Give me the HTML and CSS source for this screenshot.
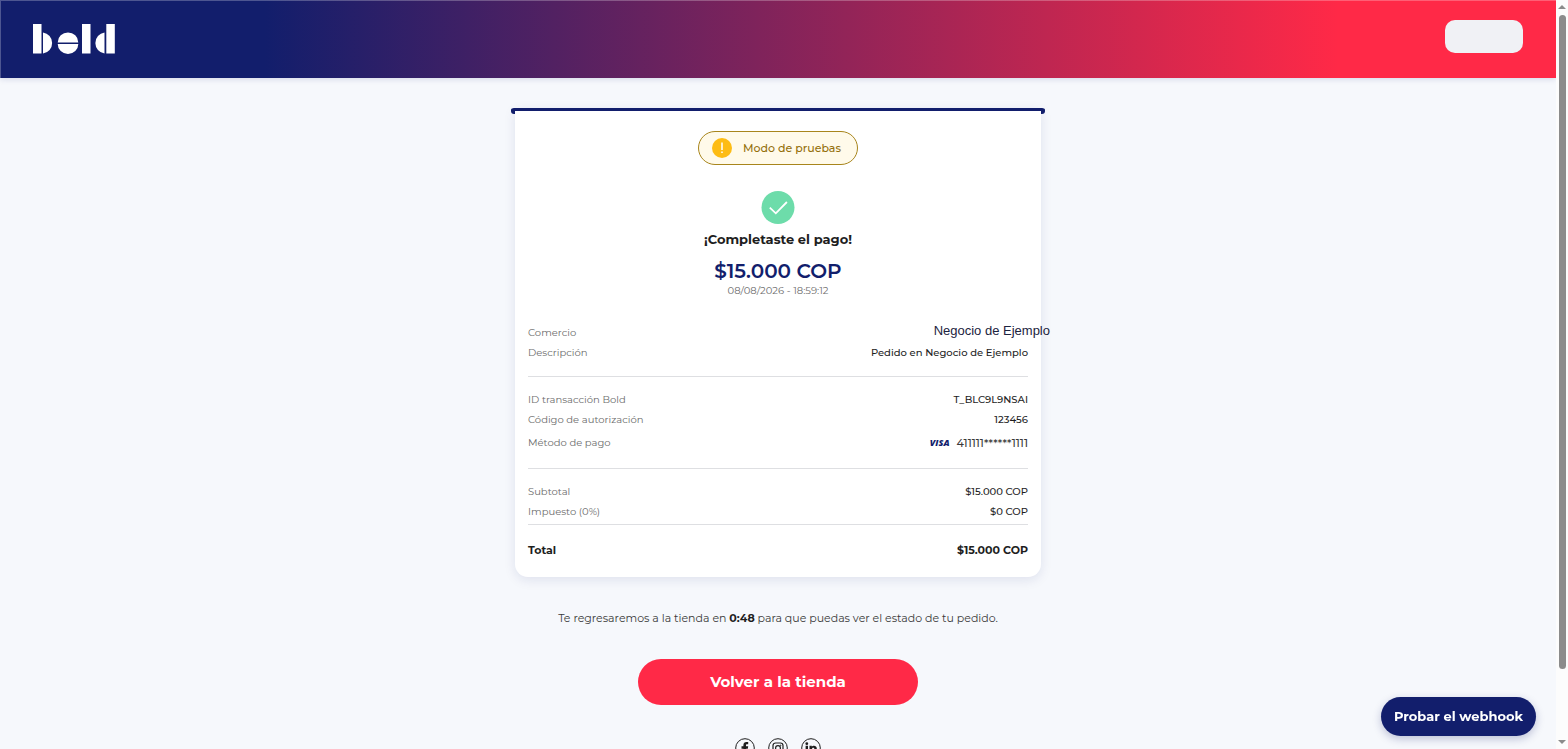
FILE: index.html
```html
<!DOCTYPE html>
<html lang="es">
<head>
	<meta charset="UTF-8">
	<meta name="viewport" content="width=device-width, initial-scale=1">
	<title>Bold</title>
	<link rel="stylesheet" href="styles.css">
</head>
<body>
	<div class="page">
		<header class="header">
			<a class="logo" href="#" aria-label="Bold">
				<svg width="82" height="30" viewBox="0 0 82 30" fill="#fff">
					<rect x="0" y="0" width="8.5" height="29.5"/>
					<path d="M10 8.5a10.6 10.6 0 0 1 0 21z"/>
					<path d="M24.7 18.4a10.3 10 0 0 1 20.6 0zM24.7 20a10.3 10 0 0 0 20.6 0z"/>
					<rect x="49" y="0" width="8.5" height="29.5"/>
					<path d="M71.5 8.5a10.6 10.6 0 0 0 0 21z"/>
					<rect x="73.3" y="0" width="8.5" height="29.5"/>
				</svg>
			</a>
			<button type="button" class="header-btn" aria-label="Menú"></button>
		</header>

		<main class="main">
			<section class="card">
				<div class="badge">
					<svg width="20" height="20" viewBox="0 0 20 20">
						<circle cx="10" cy="10" r="10" fill="#fdbc14"/>
						<path d="M10 4.5v7.5M10 13.4v1.6" stroke="#fff" stroke-width="1.5"/>
					</svg>
					<span>Modo de pruebas</span>
				</div>
				<svg class="check" width="34" height="34" viewBox="0 0 34 34">
					<circle cx="17" cy="16.5" r="16.5" fill="#6ddcaa"/>
					<path d="M8.8 16.6l6 5.7L25.9 11" fill="none" stroke="#fff" stroke-width="1.8"/>
				</svg>
				<h1 class="title">¡Completaste el pago!</h1>
				<p class="amount">$15.000 COP</p>
				<p class="date">08/08/2026 - 18:59:12</p>

				<dl class="group">
					<div class="row"><dt>Comercio</dt><dd class="shop">Negocio de Ejemplo</dd></div>
					<div class="row"><dt>Descripción</dt><dd>Pedido en Negocio de Ejemplo</dd></div>
				</dl>
				<dl class="group">
					<div class="row"><dt>ID transacción Bold</dt><dd>T_BLC9L9NSAI</dd></div>
					<div class="row"><dt>Código de autorización</dt><dd>123456</dd></div>
					<div class="row method"><dt>Método de pago</dt><dd><span class="visa">VISA</span>411111******1111</dd></div>
				</dl>
				<dl class="group sums">
					<div class="row"><dt>Subtotal</dt><dd>$15.000 COP</dd></div>
					<div class="row"><dt>Impuesto (0%)</dt><dd>$0 COP</dd></div>
				</dl>
				<dl class="group total">
					<div class="row"><dt>Total</dt><dd>$15.000 COP</dd></div>
				</dl>
			</section>

			<p class="notice">Te regresaremos a la tienda en <b>0:48</b> para que puedas ver el estado de tu pedido.</p>
			<button type="button" class="back-btn">Volver a la tienda</button>

			<nav class="social">
				<a href="#" aria-label="Facebook">
					<svg width="20" height="20" viewBox="0 0 20 20">
						<circle cx="10" cy="10" r="9.3" fill="none" stroke="#1e1e1e"/>
						<path d="M8.4 16v-5.2H6.5V8.3h1.9V7c0-2.2 1.2-3.1 3-3.1h1.8v2.3H12c-.8 0-1 .3-1 1v1.1h2.2l-.4 2.5H11V16z" fill="#1e1e1e"/>
					</svg>
				</a>
				<a href="#" aria-label="Instagram">
					<svg width="20" height="20" viewBox="0 0 20 20" fill="none" stroke="#1e1e1e">
						<circle cx="10" cy="10" r="9.3"/>
						<rect x="5" y="5" width="10" height="10" rx="2.6" stroke-width="1.2"/>
						<circle cx="10" cy="10" r="2.4" stroke-width="1.2"/>
						<circle cx="12.8" cy="7.2" r=".3"/>
					</svg>
				</a>
				<a href="#" aria-label="LinkedIn">
					<svg width="20" height="20" viewBox="0 0 20 20">
						<circle cx="10" cy="10" r="9.3" fill="none" stroke="#1e1e1e"/>
						<circle cx="5.8" cy="5.7" r="1.4" fill="#1e1e1e"/>
						<path d="M4.6 7.8H7V15H4.6zM8.5 7.8h2.3v.9c1-1.6 5-1.6 5 1.9V15h-2.4v-3.9c0-1.9-2.4-1.7-2.4 0V15H8.5z" fill="#1e1e1e"/>
					</svg>
				</a>
			</nav>
		</main>
	</div>

	<div class="scrollbar" aria-hidden="true">
		<svg width="8" height="4" viewBox="0 0 8 4"><path d="M0 4l4-4 4 4z" fill="#8b8b8b"/></svg>
		<div class="track"><div class="thumb"></div></div>
		<svg width="8" height="4" viewBox="0 0 8 4"><path d="M0 0l4 4 4-4z" fill="#8b8b8b"/></svg>
	</div>

	<button type="button" class="webhook-btn">Probar el webhook</button>
</body>
</html>
```

FILE: styles.css
```css
* {
	box-sizing: border-box;
}
body {
	display: flex;
	height: 100vh;
	margin: 0;
	overflow: hidden;
	background: #f6f8fc;
	color: #1e1e1e;
	font-family: Montserrat, Inter, sans-serif;
	font-size: 10px;
	line-height: 20px;
}
h1, p, dl, dd {
	margin: 0;
}
button {
	border: 0;
	font-family: inherit;
	cursor: pointer;
}
svg {
	display: block;
}
.page {
	flex: 1;
	overflow: hidden;
}

/* header */
.header {
	display: flex;
	justify-content: space-between;
	align-items: center;
	height: 78px;
	padding: 0 33px 2px 32px;
	border-top: 1px solid rgba(255, 255, 255, .25);
	border-left: 1px solid rgba(255, 255, 255, .25);
	background: linear-gradient(90deg, #121e6c 17%, #ff2947 86%) border-box;
	box-shadow: 0 1px 6px rgba(18, 30, 108, .15);
}
.header-btn {
	width: 78px;
	height: 33px;
	margin-bottom: 5px;
	border-radius: 10px;
	background: #f0f1f5;
}

.main {
	display: flex;
	flex-direction: column;
	align-items: center;
	padding: 30px 16px 32px;
}

/* card */
.card {
	position: relative;
	display: flex;
	flex-direction: column;
	align-items: center;
	width: 100%;
	max-width: 526px;
	padding: 23px 13px 17px;
	border-radius: 0 0 13px 13px;
	background: #fff;
	box-shadow: 0 3px 12px rgba(18, 30, 108, .1);
}
.card::before {
	content: "";
	position: absolute;
	top: 0;
	left: -4px;
	right: -4px;
	height: 3px;
	border: solid #121e6c;
	border-width: 3px 4px 0;
	border-radius: 4px;
}
.badge {
	display: flex;
	align-items: center;
	gap: 11px;
	height: 34px;
	padding: 0 16px 0 13px;
	border: 1px solid #a8851c;
	border-radius: 17px;
	background: #fffaea;
	color: #94700c;
	font-size: 11px;
	font-weight: 500;
}
.check {
	margin: 26px 0 4px;
}
.title {
	font-size: 13px;
	font-weight: 700;
	line-height: 20px;
}
.amount {
	margin-top: 8px;
	color: #121e6c;
	font-size: 20px;
	font-weight: 600;
	line-height: 28px;
}
.date {
	margin-bottom: 13px;
	color: #6c6c6c;
	line-height: 12px;
}
.group {
	width: 100%;
	padding: 13px 0;
}
.group + .group {
	border-top: 1px solid #dedfe2;
}
.row {
	display: flex;
	justify-content: space-between;
	align-items: center;
	height: 20px;
}
.row dt {
	color: #6c6c6c;
}
.row dd {
	display: flex;
	align-items: center;
	font-weight: 500;
}
/* the shop name sticks out over the card edge */
.row .shop {
	margin: 0 -22px 4px 0;
	color: #1c2340;
	font-family: "Liberation Sans", sans-serif;
	font-size: 13px;
	font-weight: 400;
}
.method {
	height: 25px;
}
.method dd {
	font-size: 11px;
	font-weight: 500;
	color: #3a3a3a;
}
.visa {
	margin-right: 7px;
	color: #121e6c;
	font-family: "Open Sans", sans-serif;
	font-size: 9px;
	font-style: italic;
	font-weight: 800;
}
.sums {
	padding-bottom: 2px;
}
.total {
	padding: 15px 0 0;
}
.total .row dt,
.total .row dd {
	color: #1e1e1e;
	font-size: 11px;
	font-weight: 700;
}

.notice {
	margin: 31px 0;
	color: #3a3a3a;
	font-size: 11px;
}
.notice b {
	color: #1e1e1e;
}
.back-btn {
	width: 280px;
	height: 46px;
	padding: 0 0 2px;
	border-radius: 23px;
	background: #ff2947;
	color: #fff;
	font-size: 15px;
	font-weight: 700;
}
.social {
	display: flex;
	gap: 13px;
	margin-top: 33px;
}
.webhook-btn {
	position: fixed;
	right: 32px;
	bottom: 13px;
	height: 39px;
	padding: 0 13px 2px;
	border-radius: 20px;
	background: #121e6c;
	color: #fff;
	font-size: 13px;
	font-weight: 700;
	box-shadow: 0 3px 8px rgba(18, 30, 108, .25);
}

/* scrollbar */
.scrollbar {
	display: flex;
	flex-direction: column;
	align-items: center;
	gap: 6px;
	width: 12px;
	padding: 5px 0;
	background: #fcfcfc;
}
.track {
	flex: 1;
	width: 7px;
}
.thumb {
	height: 91%;
	border-radius: 4px;
	background: #8b8b8b;
}
```
